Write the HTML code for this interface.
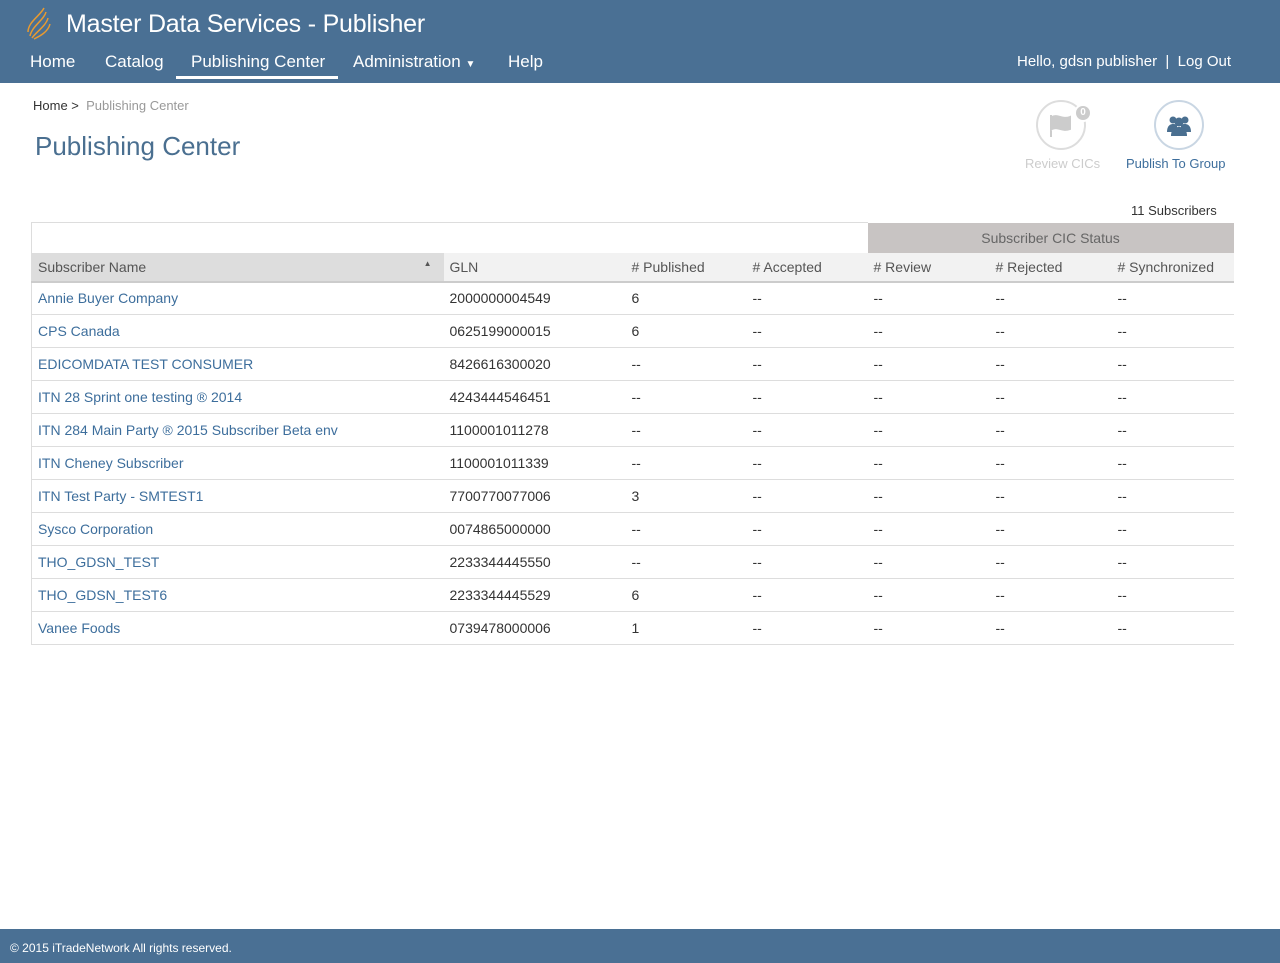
<!DOCTYPE html>
<html><head><meta charset="utf-8"><style>
*{box-sizing:border-box;margin:0;padding:0}
body{width:1280px;height:963px;position:relative;font-family:"Liberation Sans",sans-serif;background:#fff;overflow:hidden}
.hdr{position:absolute;left:0;top:0;width:1280px;height:83px;background:#4a7094;color:#fff}
.title{position:absolute;left:66px;top:10px;font-size:25px;letter-spacing:-0.2px}
.nav{position:absolute;top:52px;font-size:17px}
.ul{position:absolute;left:176px;top:76px;width:162px;height:3px;background:#fff}
.bc{position:absolute;left:33px;top:98px;font-size:13px;color:#333}
.bc span{color:#999}
h1{position:absolute;left:35px;top:131px;font-size:26px;font-weight:normal;color:#4a6f90}
.ic{position:absolute;width:50px;height:50px;border-radius:50%;border:2px solid}
.lbl{position:absolute;font-size:13px}
.cnt{position:absolute;left:1131px;top:203px;font-size:13px;color:#333}
table{position:absolute;left:31px;top:222px;width:1202px;border-collapse:collapse;font-size:14px;table-layout:fixed}
td,th{height:33px;padding:0 6px;text-align:left;font-weight:normal;border-bottom:1px solid #ddd;color:#333;white-space:nowrap}
th{height:29px;color:#555;background:#f2f2f2;border-bottom:2px solid #ccc}
a{color:#3d6e9c;text-decoration:none}
.foot{position:absolute;left:0;top:929px;width:1280px;height:34px;background:#4a7094;color:#fff;font-size:12px;padding:12px 10px}
</style></head><body>
<div class="hdr">
<svg style="position:absolute;left:24px;top:6px" width="28" height="34" viewBox="0 0 28 34"><g fill="none" stroke="#e89a30" stroke-width="1.5"><path d="M20 2C16 10 4 16 4 26"/><path d="M22 6C20 14 8 20 6 30"/><path d="M24 12C22 20 12 26 8 32"/><path d="M26 18C24 26 16 30 10 33"/></g></svg>
<div class="title">Master Data Services - Publisher</div>
<div class="nav" style="left:30px">Home</div>
<div class="nav" style="left:105px">Catalog</div>
<div class="nav" style="left:191px">Publishing Center</div>
<div class="nav" style="left:353px">Administration <span style="font-size:10px">▼</span></div>
<div class="nav" style="left:508px">Help</div>
<div class="ul"></div>
<div class="nav" style="left:1017px;top:53px;font-size:15px">Hello, gdsn publisher &nbsp;| &nbsp;Log Out</div>
</div>
<div class="bc">Home &gt; &nbsp;<span>Publishing Center</span></div>
<h1>Publishing Center</h1>
<div class="ic" style="left:1036px;top:100px;border-color:#ddd"><svg width="46" height="46" viewBox="0 0 46 46"><path d="M13 13v22M14 15c6-3 10 3 18 0v12c-8 3-12-3-18 0z" fill="#ccc" stroke="#ccc" stroke-width="2"/></svg></div>
<div style="position:absolute;left:1074px;top:104px;width:18px;height:18px;border-radius:50%;background:#ccc;border:2px solid #fff;color:#fff;font-size:10px;font-weight:bold;text-align:center;line-height:14px">0</div>
<div class="lbl" style="left:1025px;top:156px;color:#ccc">Review CICs</div>
<div class="ic" style="left:1154px;top:100px;border-color:#c9d6e3"><svg width="46" height="46" viewBox="0 0 46 46" fill="#4a6f90"><circle cx="17" cy="18" r="3.5"/><circle cx="29" cy="18" r="3.5"/><circle cx="23" cy="20" r="4.5"/><path d="M11 30c0-6 3-8 6-8s4 1 4 1v7z"/><path d="M35 30c0-6-3-8-6-8s-4 1-4 1v7z"/><path d="M15 34c0-7 4-9 8-9s8 2 8 9z"/></svg></div>
<div class="lbl" style="left:1126px;top:156px;color:#3d6e9c">Publish To Group</div>
<div class="cnt">11 Subscribers</div>
<table>
<colgroup><col style="width:412px"><col style="width:182px"><col style="width:121px"><col style="width:121px"><col style="width:122px"><col style="width:122px"><col style="width:122px"></colgroup>
<tr><td colspan="4" style="height:30px;border-top:1px solid #ddd;border-left:1px solid #ddd;border-bottom:none"></td><td colspan="3" style="height:30px;background:#c8c4c3;text-align:center;color:#666;border-bottom:none">Subscriber CIC Status</td></tr>
<tr><th style="background:#ddd;border-left:1px solid #ddd">Subscriber Name<span style="float:right;font-size:8px;margin-right:6px">▲</span></th><th>GLN</th><th># Published</th><th># Accepted</th><th># Review</th><th># Rejected</th><th># Synchronized</th></tr>
<tbody style="border-left:1px solid #ddd">
<tr><td><a>Annie Buyer Company</a></td><td>2000000004549</td><td>6</td><td>--</td><td>--</td><td>--</td><td>--</td></tr>
<tr><td><a>CPS Canada</a></td><td>0625199000015</td><td>6</td><td>--</td><td>--</td><td>--</td><td>--</td></tr>
<tr><td><a>EDICOMDATA TEST CONSUMER</a></td><td>8426616300020</td><td>--</td><td>--</td><td>--</td><td>--</td><td>--</td></tr>
<tr><td><a>ITN 28 Sprint one testing ® 2014</a></td><td>4243444546451</td><td>--</td><td>--</td><td>--</td><td>--</td><td>--</td></tr>
<tr><td><a>ITN 284 Main Party ® 2015 Subscriber Beta env</a></td><td>1100001011278</td><td>--</td><td>--</td><td>--</td><td>--</td><td>--</td></tr>
<tr><td><a>ITN Cheney Subscriber</a></td><td>1100001011339</td><td>--</td><td>--</td><td>--</td><td>--</td><td>--</td></tr>
<tr><td><a>ITN Test Party - SMTEST1</a></td><td>7700770077006</td><td>3</td><td>--</td><td>--</td><td>--</td><td>--</td></tr>
<tr><td><a>Sysco Corporation</a></td><td>0074865000000</td><td>--</td><td>--</td><td>--</td><td>--</td><td>--</td></tr>
<tr><td><a>THO_GDSN_TEST</a></td><td>2233344445550</td><td>--</td><td>--</td><td>--</td><td>--</td><td>--</td></tr>
<tr><td><a>THO_GDSN_TEST6</a></td><td>2233344445529</td><td>6</td><td>--</td><td>--</td><td>--</td><td>--</td></tr>
<tr><td><a>Vanee Foods</a></td><td>0739478000006</td><td>1</td><td>--</td><td>--</td><td>--</td><td>--</td></tr>
</tbody></table>
<div class="foot">© 2015 iTradeNetwork All rights reserved.</div>
</body></html>
